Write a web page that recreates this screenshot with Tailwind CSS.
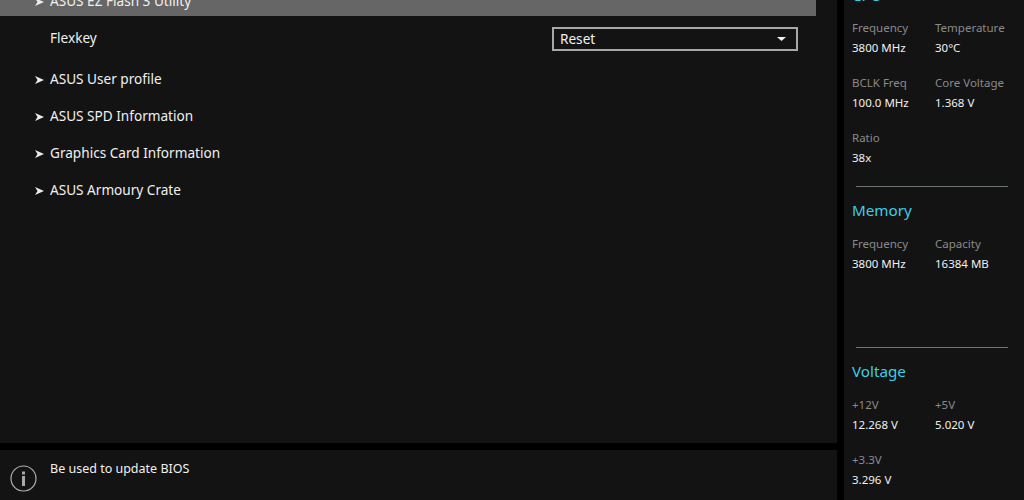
<!DOCTYPE html>
<html lang="en">
<head>
    <meta charset="UTF-8">
    <title>Tool</title>
    <script src="https://cdn.jsdelivr.net/npm/@tailwindcss/browser@4"></script>
</head>
<body class="bg-black overflow-hidden font-['Noto_Sans','Open_Sans',sans-serif]">
<div class="w-[1024px] h-[500px] flex gap-[7px] overflow-hidden">
    <!-- main column -->
    <div class="w-[837px] h-[500px] flex flex-col gap-[7px]">
        <div class="h-[443px] bg-[#131313] overflow-hidden text-[13.6px] text-[#f0f0f0]">
            <div class="w-[816px] h-[37px] mt-[-21px] bg-[#666666] flex items-center pl-[35px] pt-[8px]">
                <svg class="w-[9px] h-[8px] mr-[6px]" viewBox="0 0 9 8"><path d="M0 0 L9 4 L0 8 L2.5 4 Z" fill="#ececec"/></svg>
                <span>ASUS EZ Flash 3 Utility</span>
            </div>
            <div class="h-[43px] pt-[2px] pl-[50px] pr-[39px] flex items-center justify-between">
                <span>Flexkey</span>
                <div class="w-[246px] h-[24px] border-2 border-[#a8a8a8] flex items-center justify-between pl-[6px] pr-[10px]">
                    <span class="mt-[2px]">Reset</span>
                    <svg class="w-[9px] h-[4px]" viewBox="0 0 9 4"><path d="M0 0 H9 L4.5 4 Z" fill="#f0f0f0"/></svg>
                </div>
            </div>
            <div class="h-[37px] mt-[2px] pl-[35px] flex items-center">
                <svg class="w-[9px] h-[8px] mr-[6px]" viewBox="0 0 9 8"><path d="M0 0 L9 4 L0 8 L2.5 4 Z" fill="#ececec"/></svg>
                <span>ASUS User profile</span>
            </div>
            <div class="h-[37px] pl-[35px] flex items-center">
                <svg class="w-[9px] h-[8px] mr-[6px]" viewBox="0 0 9 8"><path d="M0 0 L9 4 L0 8 L2.5 4 Z" fill="#ececec"/></svg>
                <span>ASUS SPD Information</span>
            </div>
            <div class="h-[37px] pl-[35px] flex items-center">
                <svg class="w-[9px] h-[8px] mr-[6px]" viewBox="0 0 9 8"><path d="M0 0 L9 4 L0 8 L2.5 4 Z" fill="#ececec"/></svg>
                <span>Graphics Card Information</span>
            </div>
            <div class="h-[37px] pl-[35px] flex items-center">
                <svg class="w-[9px] h-[8px] mr-[6px]" viewBox="0 0 9 8"><path d="M0 0 L9 4 L0 8 L2.5 4 Z" fill="#ececec"/></svg>
                <span>ASUS Armoury Crate</span>
            </div>
        </div>
        <div class="h-[50px] bg-[#131313] flex pl-[10px] text-[12.5px] text-[#f0f0f0]">
            <svg class="w-[27px] h-[27px] mt-[15px] mr-[13px]" viewBox="0 0 27 27">
                <circle cx="13.5" cy="13.5" r="12.5" fill="none" stroke="#b0b0b0" stroke-width="1.2"/>
                <rect x="12" y="6.5" width="3" height="3" fill="#a8a8a8"/>
                <rect x="12" y="11" width="3" height="10" fill="#a8a8a8"/>
            </svg>
            <span class="mt-[10px] h-[18px] leading-[18px]">Be used to update BIOS</span>
        </div>
    </div>
    <!-- hardware monitor -->
    <div class="w-[180px] h-[500px] bg-[#131313] overflow-hidden pl-[8px] text-[11.5px] leading-[20px]">
        <div class="text-[15.2px] leading-[22px] text-[#3ccfe6] mt-[-16px] h-[34px]">CPU</div>
        <div class="grid grid-cols-[83px_1fr]">
            <div class="h-[55px]"><div class="text-[#8a8a8a]">Frequency</div><div class="text-[#f0f0f0]">3800 MHz</div></div>
            <div class="h-[55px]"><div class="text-[#8a8a8a]">Temperature</div><div class="text-[#f0f0f0]">30°C</div></div>
            <div class="h-[55px]"><div class="text-[#8a8a8a]">BCLK Freq</div><div class="text-[#f0f0f0]">100.0 MHz</div></div>
            <div class="h-[55px]"><div class="text-[#8a8a8a]">Core Voltage</div><div class="text-[#f0f0f0]">1.368 V</div></div>
            <div class="h-[58px]"><div class="text-[#8a8a8a]">Ratio</div><div class="text-[#f0f0f0]">38x</div></div>
        </div>
        <div class="ml-[4px] w-[152px] h-px bg-[#6f7678]"></div>
        <div class="text-[15.2px] leading-[22px] text-[#3ccfe6] mt-[12px] h-[35px]">Memory</div>
        <div class="grid grid-cols-[83px_1fr] h-[100px]">
            <div><div class="text-[#8a8a8a]">Frequency</div><div class="text-[#f0f0f0]">3800 MHz</div></div>
            <div><div class="text-[#8a8a8a]">Capacity</div><div class="text-[#f0f0f0]">16384 MB</div></div>
        </div>
        <div class="mt-[13px] ml-[4px] w-[152px] h-px bg-[#6f7678]"></div>
        <div class="text-[15.2px] leading-[22px] text-[#3ccfe6] mt-[12px] h-[35px]">Voltage</div>
        <div class="grid grid-cols-[83px_1fr]">
            <div class="h-[55px]"><div class="text-[#8a8a8a]">+12V</div><div class="text-[#f0f0f0]">12.268 V</div></div>
            <div class="h-[55px]"><div class="text-[#8a8a8a]">+5V</div><div class="text-[#f0f0f0]">5.020 V</div></div>
            <div class="h-[55px]"><div class="text-[#8a8a8a]">+3.3V</div><div class="text-[#f0f0f0]">3.296 V</div></div>
        </div>
    </div>
</div>
</body>
</html>
